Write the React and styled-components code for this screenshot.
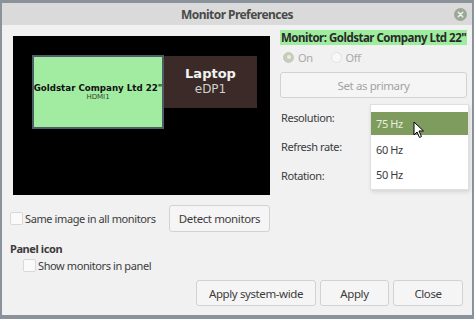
import React from "react";
import styled, { createGlobalStyle } from "styled-components";

const GlobalStyle = createGlobalStyle`
  html, body {
    margin: 0;
    padding: 0;
    background: #8a929b;
  }
  body {
    font-family: "Noto Sans", "Open Sans", sans-serif;
    font-size: 11px;
    letter-spacing: -0.4px;
    color: #3c3c3c;
  }
`;

const Window = styled.div`
  margin: 3px 0 0 2px;
  width: 470px;
  height: 312px;
  background: #f1f1f1;
  display: flex;
  flex-direction: column;
  box-sizing: border-box;
`;

const TitleBar = styled.div`
  position: relative;
  height: 22px;
  flex: none;
  background: #dadada;
  display: flex;
  align-items: center;
  justify-content: center;
`;

const Title = styled.span`
  font-weight: 700;
  font-size: 12px;
  letter-spacing: -0.55px;
  color: #4a4a4a;
`;

const CloseIcon = styled.svg`
  position: absolute;
  right: 5px;
  top: 5px;
`;

const Body = styled.div`
  flex: 1;
  display: flex;
  flex-direction: column;
  padding: 5px 5px 0 6px;
`;

const TopRow = styled.div`
  display: flex;
  gap: 10px;
`;

const LeftCol = styled.div`
  width: 262px;
  display: flex;
  flex-direction: column;
`;

const Canvas = styled.div`
  position: relative;
  margin: 6px 0 0 5px;
  width: 257px;
  height: 159px;
  background: #000;
`;

const Monitor = styled.div`
  position: absolute;
  box-sizing: border-box;
  display: flex;
  flex-direction: column;
  align-items: center;
  justify-content: center;
  font-family: "DejaVu Sans", sans-serif;
  letter-spacing: 0;
  background: ${(p) => p.$bg};
  border: ${(p) => (p.$selected ? "2px solid #4d5e66" : "none")};
  color: ${(p) => p.$fg};
`;

const MonitorName = styled.div`
  font-weight: 700;
  font-size: ${(p) => p.$size}px;
  line-height: 1.15;
  white-space: nowrap;
`;

const MonitorPort = styled.div`
  font-size: ${(p) => p.$size}px;
  line-height: 1.2;
  color: ${(p) => p.$fg || "inherit"};
`;

const CheckRow = styled.div`
  display: flex;
  align-items: center;
  margin: ${(p) => p.$margin};
`;

const CheckBox = styled.span`
  width: 11px;
  height: 11px;
  border: 1px solid #d9d9d9;
  border-radius: 2px;
  background: #fafafa;
  margin-right: 2px;
  flex: none;
`;

const Spacer = styled.div`
  flex: 1;
`;

const Button = styled.div`
  box-sizing: border-box;
  height: ${(p) => p.$h || 26}px;
  width: ${(p) => (p.$w ? `${p.$w}px` : "auto")};
  display: flex;
  align-items: center;
  justify-content: center;
  border: 1px solid #d2d2d2;
  border-radius: 3px;
  background: #f5f5f5;
  color: ${(p) => (p.$disabled ? "#a3a3a3" : "#3c3c3c")};
  font-size: 11.5px;
`;

const RightCol = styled.div`
  position: relative;
  width: 187px;
  display: flex;
  flex-direction: column;
`;

const MonitorTitle = styled.div`
  height: 15px;
  line-height: 15px;
  background: #9eec9e;
  font-weight: 700;
  font-size: 11.5px;
  letter-spacing: -0.5px;
  color: #2a2a2a;
  white-space: nowrap;
  padding-left: 1px;
`;

const RadioRow = styled.div`
  display: flex;
  align-items: center;
  height: 16px;
  margin: 4px 0 7px 3px;
  color: #a8a8a8;
`;

const Radio = styled.span`
  box-sizing: border-box;
  width: 11px;
  height: 11px;
  border-radius: 50%;
  margin-right: 4px;
  display: flex;
  align-items: center;
  justify-content: center;
  background: ${(p) => (p.$on ? "#c5ccbb" : "#f8f8f8")};
  border: 1px solid ${(p) => (p.$on ? "#c5ccbb" : "#e2e2e2")};
  &::after {
    content: "";
    width: 4px;
    height: 4px;
    border-radius: 50%;
    background: ${(p) => (p.$on ? "#e8ece2" : "transparent")};
  }
`;

const RadioLabel = styled.span`
  margin-right: 18px;
`;

const Fields = styled.div`
  display: flex;
  flex-direction: column;
  margin-top: 5px;
`;

const FieldLabel = styled.div`
  height: 29px;
  line-height: 29px;
  padding-left: 1px;
`;

const Popup = styled.div`
  position: absolute;
  left: 90px;
  top: 74px;
  width: 99px;
  box-sizing: border-box;
  padding: 7px 0 2px;
  background: #fff;
  border: 1px solid #e0e0e0;
  box-shadow: 1px 2px 4px rgba(0, 0, 0, 0.12);
`;

const Option = styled.div`
  height: ${(p) => (p.$active ? 23 : 25)}px;
  margin-bottom: ${(p) => (p.$active ? 2 : 0)}px;
  display: flex;
  align-items: center;
  padding-left: 5px;
  background: ${(p) => (p.$active ? "#7f9c5f" : "transparent")};
  color: ${(p) => (p.$active ? "#e6eedc" : "#3c3c3c")};
`;

const Cursor = styled.svg`
  position: absolute;
  left: 133px;
  top: 91px;
`;

const SectionTitle = styled.div`
  font-weight: 700;
  line-height: 14px;
  margin-top: 10px;
  padding-left: 2px;
`;

const Footer = styled.div`
  display: flex;
  justify-content: flex-end;
  gap: 4px;
  margin-top: 7px;
  padding-right: 4px;
`;

export default function App() {
  return (
    <>
      <GlobalStyle />
      <Window>
        <TitleBar>
          <Title>Monitor Preferences</Title>
          <CloseIcon width="13" height="13" viewBox="0 0 13 13">
            <circle cx="6.5" cy="6.5" r="6.5" fill="#9ca795" />
            <path d="M4.3 4.3 L8.7 8.7 M8.7 4.3 L4.3 8.7" stroke="#eef0ea" strokeWidth="1.6" strokeLinecap="round" />
          </CloseIcon>
        </TitleBar>
        <Body>
          <TopRow>
            <LeftCol>
              <Canvas>
                <Monitor
                  $selected
                  $bg="#a2eca2"
                  $fg="#111"
                  style={{ left: 19, top: 19, width: 132, height: 74 }}
                >
                  <MonitorName $size={8.7}>Goldstar Company Ltd 22"</MonitorName>
                  <MonitorPort $size={7} $fg="#2f4a2f">HDMI1</MonitorPort>
                </Monitor>
                <Monitor
                  $bg="#3b2a27"
                  $fg="#f2f2f2"
                  style={{ left: 151, top: 20, width: 93, height: 52 }}
                >
                  <MonitorName $size={13}>Laptop</MonitorName>
                  <MonitorPort $size={12} $fg="#cfcfcf">eDP1</MonitorPort>
                </Monitor>
              </Canvas>
              <CheckRow $margin="10px 0 0 2px">
                <CheckBox />
                <span>Same image in all monitors</span>
                <Spacer />
                <Button $w={101} $h={27}>Detect monitors</Button>
              </CheckRow>
            </LeftCol>
            <RightCol>
              <MonitorTitle>Monitor: Goldstar Company Ltd 22"</MonitorTitle>
              <RadioRow>
                <Radio $on />
                <RadioLabel>On</RadioLabel>
                <Radio />
                <RadioLabel>Off</RadioLabel>
              </RadioRow>
              <Button $disabled $h={26}>Set as primary</Button>
              <Fields>
                <FieldLabel>Resolution:</FieldLabel>
                <FieldLabel>Refresh rate:</FieldLabel>
                <FieldLabel>Rotation:</FieldLabel>
              </Fields>
              <Popup>
                <Option $active>75 Hz</Option>
                <Option>60 Hz</Option>
                <Option>50 Hz</Option>
              </Popup>
              <Cursor width="12" height="18" viewBox="0 0 12 18">
                <path
                  d="M1 1 L1 14 L4 11 L6.5 16.5 L8.5 15.5 L6 10 L10.5 10 Z"
                  fill="#fff"
                  stroke="#000"
                  strokeWidth="1"
                  strokeLinejoin="round"
                />
              </Cursor>
            </RightCol>
          </TopRow>
          <SectionTitle>Panel icon</SectionTitle>
          <CheckRow $margin="2px 0 0 15px">
            <CheckBox />
            <span>Show monitors in panel</span>
          </CheckRow>
          <Footer>
            <Button $w={120}>Apply system-wide</Button>
            <Button $w={69}>Apply</Button>
            <Button $w={70}>Close</Button>
          </Footer>
        </Body>
      </Window>
    </>
  );
}
